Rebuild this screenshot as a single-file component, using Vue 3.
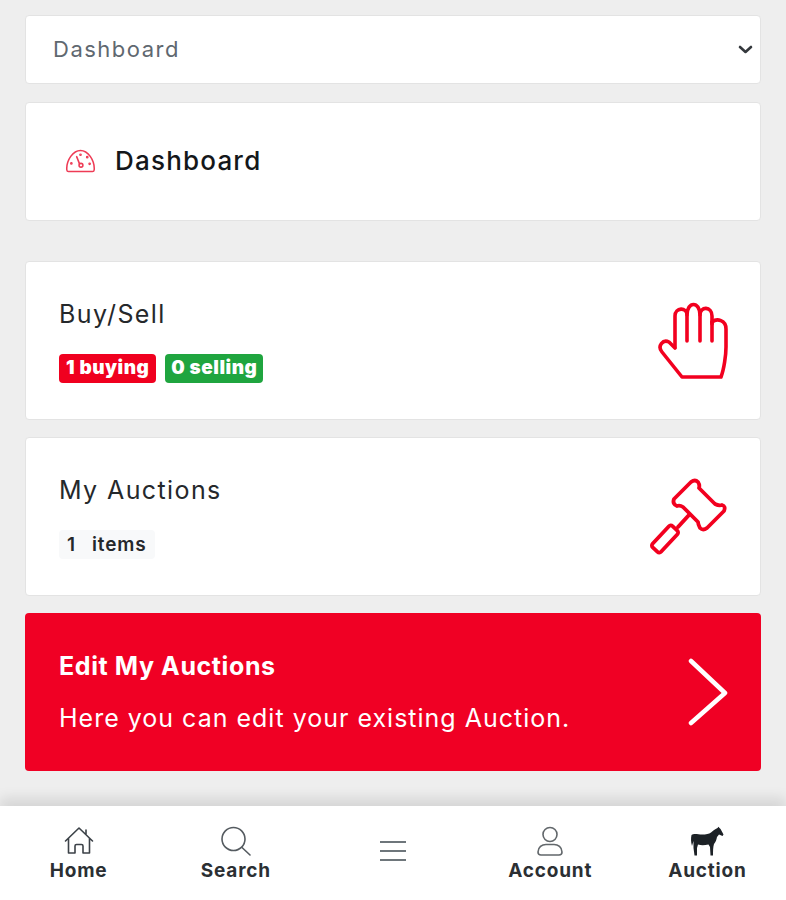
<script setup>
const navItems = [
  { key: 'home', label: 'Home' },
  { key: 'search', label: 'Search' },
  { key: 'menu', label: '' },
  { key: 'account', label: 'Account' },
  { key: 'auction', label: 'Auction' }
]
</script>

<template>
  <div class="page">
    <main class="content">
      <div class="picker-wrap">
        <select class="picker">
          <option>Dashboard</option>
        </select>
        <svg class="picker-arrow" viewBox="0 0 15 9" fill="none" stroke="#34383c" stroke-width="2.600" stroke-linecap="round" stroke-linejoin="round">
          <path d="M2 2l5.500 5L13 2" />
        </svg>
      </div>

      <section class="card heading-card">
        <svg class="gauge" viewBox="0 0 32 26" fill="none" stroke="#ee3b55" stroke-width="1.600" stroke-linecap="round" stroke-linejoin="round">
          <path d="M3.500 24.500h25c1 0 1.600-.6 1.700-1.600.1-.6.1-1.200.1-1.800C30.300 12.800 24 2.500 16 2.500S1.700 12.800 1.700 21.100c0 .6 0 1.200.1 1.800.1 1 .7 1.600 1.700 1.600z" />
          <path d="M12 9l3 7.500" />
          <circle cx="16.500" cy="18" r="2" />
          <circle cx="16" cy="7" r=".6" />
          <circle cx="23" cy="9.500" r=".6" />
          <circle cx="25.500" cy="16.500" r=".6" />
          <circle cx="6.500" cy="16" r=".6" />
        </svg>
        <h1 class="heading">Dashboard</h1>
      </section>

      <section class="card stat-card">
        <div>
          <h2 class="stat-title">Buy/Sell</h2>
          <div class="badges">
            <span class="badge red">1 buying</span>
            <span class="badge green">0 selling</span>
          </div>
        </div>
        <svg class="hand" viewBox="0 0 70 78" fill="none" stroke="#f2001f" stroke-width="3.600" stroke-linecap="round" stroke-linejoin="round">
          <path d="M17 45V14c0-9 12-9 12-1c0-14 13-14 13 0c0-9 12-9 12 1v8" />
          <path d="M54 20c5-4 14-2 14 7V45c0 8-2 22-5 30H24L4 50c-5-6 1-13 7-10l6 6" />
          <path d="M29 13V39M42 13V39M54 20V39" />
        </svg>
      </section>

      <section class="card stat-card">
        <div>
          <h2 class="stat-title">My Auctions</h2>
          <div class="items"><span>1</span><span>items</span></div>
        </div>
        <svg class="gavel" viewBox="0 0 80 80" fill="none" stroke="#f2001f" stroke-width="3.800" stroke-linecap="round" stroke-linejoin="round">
          <path d="M26 22 43 5Q47 2 50 5 52 8 51 11L67 27Q71 29 74 28 78 29 76 34L59 51Q55 54 52 51 50 47 50 45L35 30Q32 28 29 29 24 27 26 22z" />
          <path d="M41 38 30 50" stroke-width="4" />
          <rect x="-14.500" y="-5.800" width="29" height="11.600" rx="2.500" transform="translate(17 62) rotate(-47)" />
        </svg>
      </section>

      <section class="promo">
        <div>
          <h2 class="promo-title">Edit My Auctions</h2>
          <p class="promo-text">Here you can edit your existing Auction.</p>
        </div>
        <svg class="chevron" viewBox="0 0 40 68" fill="none" stroke="#fff" stroke-width="4.500" stroke-linecap="round" stroke-linejoin="round">
          <path d="M3 3l34 32L3 65" />
        </svg>
      </section>
    </main>

    <nav class="bottom-nav">
      <a v-for="item in navItems" :key="item.key" class="nav-item">
        <svg v-if="item.key === 'home'" class="nav-icon" viewBox="0 0 32 30" fill="none" stroke="#3c4248" stroke-width="1.600" stroke-linejoin="round" stroke-linecap="round">
          <path d="M2.500 15 16 2l13.500 13M5.500 12V27H12V20a1.500 1.500 0 0 1 1.500-1.500h5a1.500 1.500 0 0 1 1.500 1.500v7h6.500V12M23 4v4" />
        </svg>
        <svg v-else-if="item.key === 'search'" class="nav-icon" viewBox="0 0 32 30" fill="none" stroke="#555b60" stroke-width="1.600" stroke-linecap="round">
          <circle cx="13.500" cy="13" r="11.500" />
          <path d="M22 21.500 30 29" />
        </svg>
        <svg v-else-if="item.key === 'menu'" class="menu-icon" viewBox="0 0 26 22" fill="none" stroke="#3f4a50" stroke-width="1.600">
          <path d="M0 2h26M0 11h26M0 20h26" />
        </svg>
        <svg v-else-if="item.key === 'account'" class="nav-icon" viewBox="0 0 32 30" fill="none" stroke="#62676b" stroke-width="1.600" stroke-linejoin="round">
          <circle cx="16" cy="8.500" r="7" />
          <path d="M7 29h18c2 0 3-1 3-3 0-5-4-7.500-8-7.500h-8c-4 0-8 2.500-8 7.500 0 2 1 3 3 3z" />
        </svg>
        <svg v-else class="horse-icon" viewBox="0 0 34 30" fill="#1c2126">
          <path d="M1.500 9C4 7 8 8.500 12 8.500 16 8.500 19 8 21 6.500 23 5 25 3 27.500 2L28.500 .8 29.500 2C31 3 32 6 33.500 8.500L32.500 10 29 8.500 27 11C26.500 14 25.500 16 24 18 23 21 23 25 23 29.500H20.500L20 21 18.500 18.500C14 19.500 11 19.500 8 18.500L7 22V29.500H4.500L3.500 22V15L2 20C.8 16 .8 12 1.500 9Z" />
        </svg>
        <span v-if="item.label" class="nav-label">{{ item.label }}</span>
      </a>
    </nav>
  </div>
</template>

<style>
body {
  margin: 0;
  background: #eeeeee;
}
</style>

<style scoped>
.page {
  display: flex;
  flex-direction: column;
  min-height: 900px;
  font-family: Inter, "Open Sans", sans-serif;
  color: #1a1d21;
}
.content {
  flex: 1;
  display: flex;
  flex-direction: column;
  gap: 17px;
  padding: 15px 25px 0 25px;
}
.picker-wrap {
  position: relative;
  height: 69px;
  margin-bottom: 1px;
}
.picker {
  appearance: none;
  width: 100%;
  height: 100%;
  padding: 0 40px 2px 27px;
  border: 1px solid #e3e3e3;
  border-radius: 4px;
  background: #fff;
  color: #5f6870;
  font-family: inherit;
  font-size: 22px;
  letter-spacing: 1.5px;
}
.picker-arrow {
  position: absolute;
  right: 8px;
  top: 30px;
  width: 15px;
  height: 9px;
  pointer-events: none;
}
.card {
  display: flex;
  align-items: center;
  background: #fff;
  border: 1px solid #e3e3e3;
  border-radius: 4px;
  box-sizing: border-box;
}
.heading-card {
  height: 119px;
  gap: 19px;
  padding: 0 0 2px 39px;
  margin-bottom: 23px;
}
.gauge {
  width: 31px;
  height: 25px;
}
.heading {
  margin: 0;
  font-size: 26px;
  font-weight: 500;
  letter-spacing: 1.2px;
  color: #14171a;
}
.stat-card {
  height: 159px;
  justify-content: space-between;
  padding: 0 32px 0 33px;
}
.stat-title {
  margin: 0 0 24px;
  font-size: 25px;
  line-height: 32px;
  font-weight: 400;
  letter-spacing: 1.4px;
  color: #25282b;
}
.badges {
  display: flex;
  gap: 9px;
}
.badge {
  height: 29px;
  padding: 0 7px;
  border-radius: 4px;
  color: #fff;
  font-size: 19px;
  line-height: 28px;
  font-weight: 900;
  letter-spacing: 0.5px;
  box-sizing: border-box;
}
.red {
  background: #f0001f;
}
.green {
  padding: 0 6px;
  background: #1fa53f;
}
.items {
  display: inline-flex;
  gap: 16px;
  padding: 0 8px;
  height: 29px;
  align-items: center;
  background: #f8f9fa;
  border-radius: 4px;
  font-size: 19px;
  font-weight: 600;
  letter-spacing: 0.9px;
  color: #25282b;
}
.hand {
  width: 70px;
  height: 78px;
}
.gavel {
  width: 80px;
  height: 80px;
}
.promo {
  height: 158px;
  display: flex;
  align-items: center;
  justify-content: space-between;
  padding: 0 33px 0 34px;
  background: #f00024;
  border-radius: 4px;
  color: #fff;
  box-sizing: border-box;
}
.promo-title {
  margin: 0 0 20px;
  font-size: 25px;
  line-height: 32px;
  font-weight: 700;
  letter-spacing: 0.6px;
}
.promo-text {
  margin: 0;
  font-size: 25px;
  line-height: 32px;
  font-weight: 400;
  letter-spacing: 1px;
}
.chevron {
  width: 40px;
  height: 68px;
}
.bottom-nav {
  display: grid;
  grid-template-columns: repeat(5, 1fr);
  height: 94px;
  box-sizing: border-box;
  background: #fff;
  box-shadow: 0 -8px 12px rgba(0, 0, 0, 0.1);
}
.nav-item {
  display: flex;
  flex-direction: column;
  align-items: center;
  justify-content: center;
  gap: 3px;
  padding-top: 2px;
}
.nav-icon {
  width: 32px;
  height: 30px;
}
.horse-icon {
  width: 34px;
  height: 30px;
}
.menu-icon {
  width: 26px;
  height: 22px;
  margin-bottom: 6px;
}
.nav-label {
  font-size: 19px;
  line-height: 24px;
  font-weight: 700;
  letter-spacing: 0.8px;
  color: #2b2f33;
}
</style>
